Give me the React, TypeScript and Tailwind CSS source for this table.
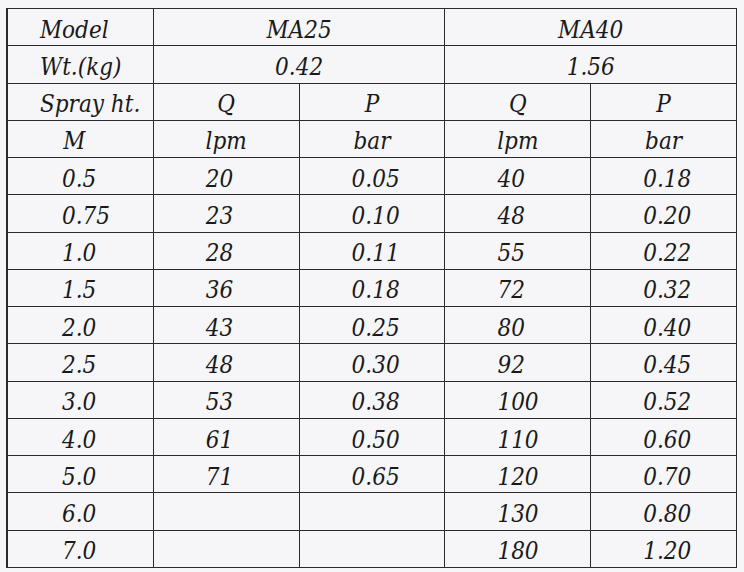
const rows: [string, string, string, string, string][] = [
  ["0.5", "20", "0.05", "40", "0.18"],
  ["0.75", "23", "0.10", "48", "0.20"],
  ["1.0", "28", "0.11", "55", "0.22"],
  ["1.5", "36", "0.18", "72", "0.32"],
  ["2.0", "43", "0.25", "80", "0.40"],
  ["2.5", "48", "0.30", "92", "0.45"],
  ["3.0", "53", "0.38", "100", "0.52"],
  ["4.0", "61", "0.50", "110", "0.60"],
  ["5.0", "71", "0.65", "120", "0.70"],
  ["6.0", "", "", "130", "0.80"],
  ["7.0", "", "", "180", "1.20"],
];

function Cell({
  children,
  className = "",
}: {
  children?: React.ReactNode;
  className?: string;
}) {
  return (
    <div
      className={`flex items-center pt-[5px] border-r border-b border-[#2b2b2b] ${className}`}
    >
      {children}
    </div>
  );
}

export default function App() {
  return (
    <div className="w-[744px] h-[572px] bg-[#f6f6f8] pl-[6px] pt-[8px] [font-family:'DejaVu_Serif_Condensed','DejaVu_Serif',serif] font-stretch-condensed italic text-[24px] leading-[30px] text-[#1a1a1a]">
      <div className="grid grid-cols-5 grid-rows-[repeat(15,1fr)] w-[731px] h-[560px] border-l-2 border-t border-[#2b2b2b]">
        {/* Header */}
        <Cell className="pl-[32px]">Model</Cell>
        <Cell className="col-span-2 justify-center">MA25</Cell>
        <Cell className="col-span-2 justify-center">MA40</Cell>

        <Cell className="pl-[32px]">Wt.(kg)</Cell>
        <Cell className="col-span-2 justify-center">0.42</Cell>
        <Cell className="col-span-2 justify-center">1.56</Cell>

        <Cell className="pl-[32px]">Spray ht.</Cell>
        <Cell className="justify-center">Q</Cell>
        <Cell className="justify-center">P</Cell>
        <Cell className="justify-center">Q</Cell>
        <Cell className="justify-center">P</Cell>

        <Cell className="justify-center pr-[12px]">M</Cell>
        <Cell className="justify-center">lpm</Cell>
        <Cell className="justify-center">bar</Cell>
        <Cell className="justify-center">lpm</Cell>
        <Cell className="justify-center">bar</Cell>

        {/* Data */}
        {rows.map((r, i) =>
          r.map((v, j) => (
            <Cell key={`${i}-${j}`} className={j === 0 ? "pl-[54px]" : "pl-[52px]"}>
              {v}
            </Cell>
          ))
        )}
      </div>
    </div>
  );
}
